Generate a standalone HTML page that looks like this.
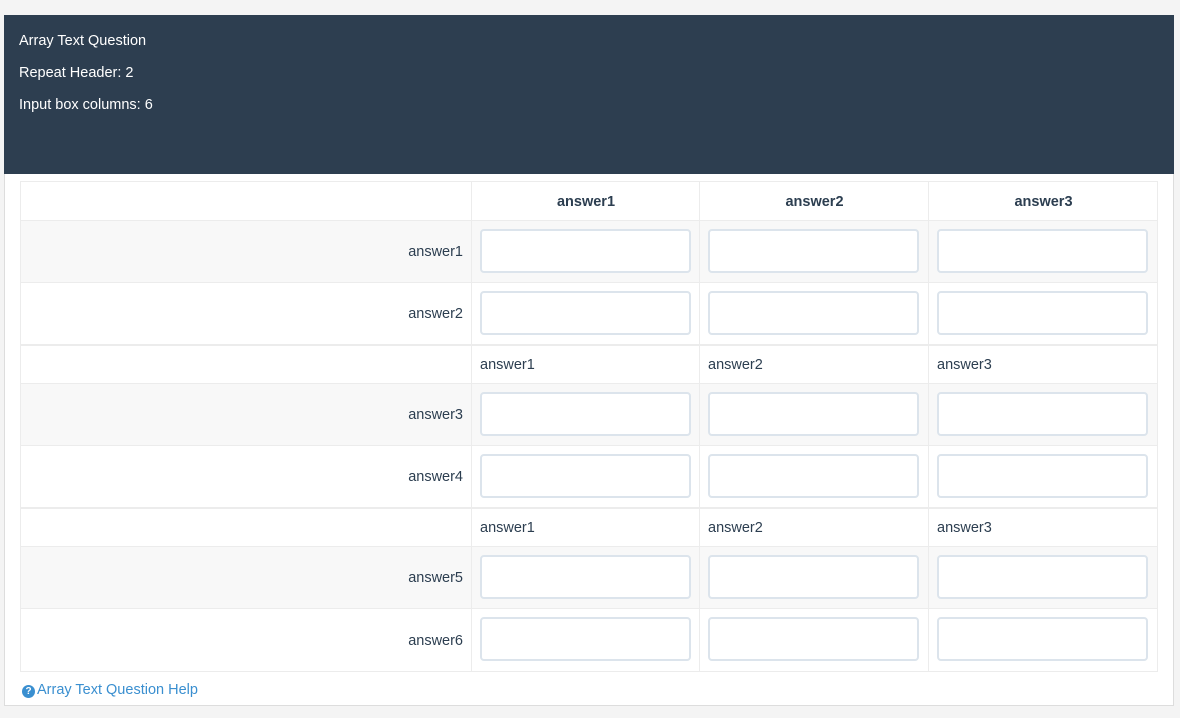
<!DOCTYPE html>
<html><head><style>
*{box-sizing:border-box;margin:0;padding:0}
body{width:1180px;height:718px;background:#f4f4f4;font-family:"Liberation Sans",sans-serif;font-size:14px;color:#2c3e50;position:relative;overflow:hidden}
.panel{position:absolute;left:4px;top:15px;width:1170px;height:691px;background:#fff;border:1px solid #ddd;border-top:none}
.head{position:absolute;left:4px;top:15px;width:1170px;height:159px;background:#2d3e50;color:#fff;font-size:14.5px}
.head div{position:absolute;left:15px}
.c{position:absolute;border:1px solid #ececec;margin:-1px 0 0 -1px}
.g{background:#f8f8f8}
.t{position:absolute;font-size:14.5px}
.in{position:absolute;width:211px;height:44px;border:2px solid #dce4ec;border-radius:4px;background:#fff}
.help{position:absolute;left:22px;top:682px;color:#3a8fd0;font-size:14.5px}
.help span{display:inline-block;width:13px;height:13px;border-radius:50%;background:#3a8fd0;color:#fff;font-size:10px;font-weight:bold;text-align:center;line-height:13px;vertical-align:0px;margin-right:2px}
</style></head><body>
<div class="panel"></div>
<div class="head"><div style="top:18px">Array Text Question</div><div style="top:50px">Repeat Header: 2</div><div style="top:82px">Input box columns: 6</div></div>
<div id="tb"></div>
<div class="help"><span>?</span>Array Text Question Help</div>
<script>
var xs=[21,472,700,929,1158];
var rows=[[182,221,'h'],[221,283,'g','answer1'],[283,345,'w','answer2'],[346,384,'s'],[384,446,'g','answer3'],[446,508,'w','answer4'],[509,547,'s'],[547,609,'g','answer5'],[609,672,'w','answer6']];
var h='';
rows.forEach(function(r){
 for(var i=0;i<4;i++){
  h+='<div class="c'+(r[2]=='g'?' g':'')+'" style="left:'+xs[i]+'px;top:'+r[0]+'px;width:'+(xs[i+1]-xs[i]+1)+'px;height:'+(r[1]-r[0]+1)+'px"></div>';
 }
 var cy=(r[0]+r[1])/2-8;
 if(r[2]=='h'){for(var i=1;i<4;i++)h+='<div class="t" style="font-weight:bold;left:'+xs[i]+'px;width:'+(xs[i+1]-xs[i])+'px;text-align:center;top:'+cy+'px">answer'+i+'</div>';}
 else if(r[2]=='s'){for(var i=1;i<4;i++)h+='<div class="t" style="left:'+(xs[i]+8)+'px;top:'+cy+'px">answer'+i+'</div>';}
 else{h+='<div class="t" style="right:'+(1180-463)+'px;top:'+cy+'px">'+r[3]+'</div>';
  for(var i=1;i<4;i++)h+='<div class="in" style="left:'+(xs[i]+8)+'px;top:'+(r[0]+8)+'px"></div>';}
});
document.getElementById('tb').innerHTML=h;
</script>
</body></html>
